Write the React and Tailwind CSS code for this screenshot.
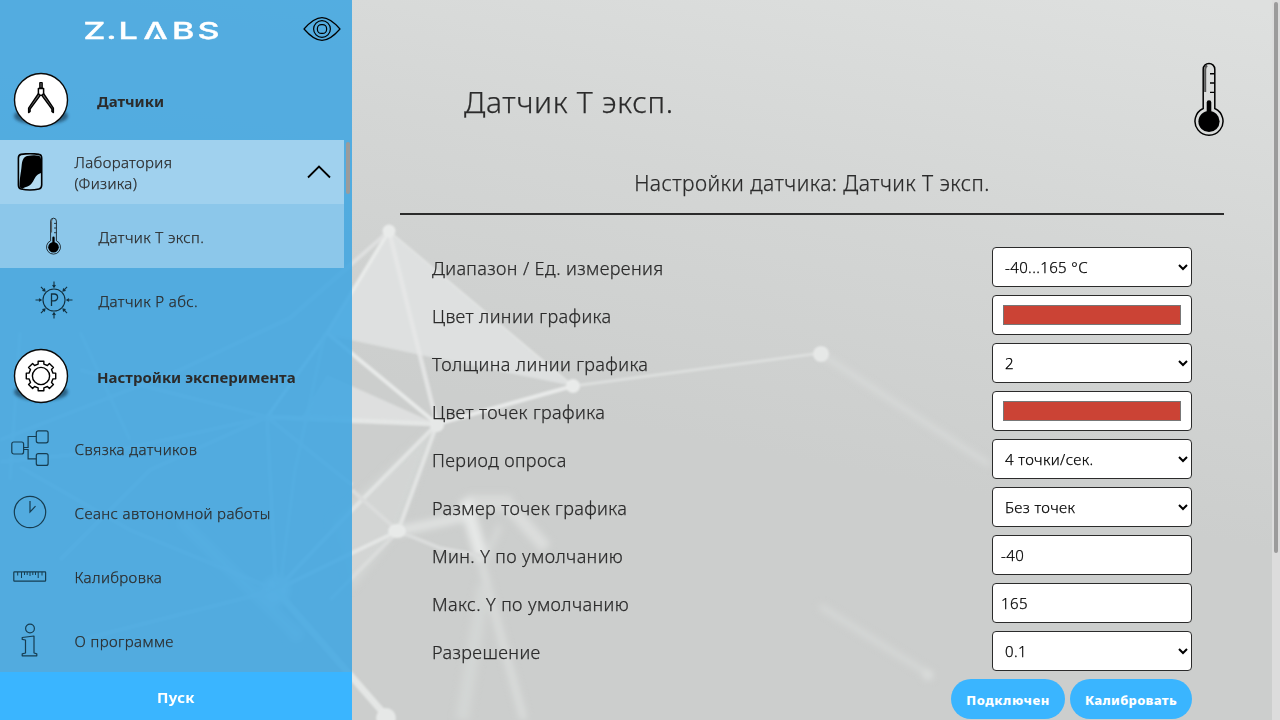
import React from "react";

const FONT = "font-['Noto_Sans','Open_Sans',sans-serif]";

function Backdrop() {
  return (
    <svg className="absolute inset-0 h-full w-full" viewBox="0 0 1280 720" preserveAspectRatio="none" aria-hidden="true">
      <defs>
        <linearGradient id="base" gradientUnits="userSpaceOnUse" x1="900" y1="-60" x2="800" y2="460">
          <stop offset="0" stopColor="#dee0df" />
          <stop offset="0.5" stopColor="#d4d6d5" />
          <stop offset="1" stopColor="#cccecd" />
        </linearGradient>
        <filter id="soft1" filterUnits="userSpaceOnUse" x="0" y="0" width="1280" height="740"><feGaussianBlur stdDeviation="1.2" /></filter>
        <filter id="soft3" filterUnits="userSpaceOnUse" x="0" y="0" width="1280" height="740"><feGaussianBlur stdDeviation="3.5" /></filter>
      </defs>
      <rect width="1280" height="720" fill="url(#base)" />
      <g filter="url(#soft3)">
        <path d="M437 424 330 520 352 590 398 531Z" fill="#d6d8d7" opacity="0.7" />
        <path d="M821 354 990 465" stroke="#d9dbda" strokeWidth="5" />
        <path d="M482 565 502 640 524 720" fill="none" stroke="#dcdedd" strokeWidth="7" opacity="0.9" />
        <path d="M484 585 462 720" stroke="#d5d7d6" strokeWidth="14" opacity="0.8" />
        <path d="M466 503h46" stroke="#dcdedd" strokeWidth="16" opacity="0.8" />
        <path d="M508 505 546 548" stroke="#dbdddc" strokeWidth="13" />
        <path d="M465 500 483 562" stroke="#e6e8e7" strokeWidth="13" />
        <path d="M500 525 484 562" stroke="#d6d8d7" strokeWidth="6" />
        <path d="M398 531 465 517" stroke="#e0e2e1" strokeWidth="9" />
        <path d="M820 606 930 675" stroke="#d6d8d7" strokeWidth="6" />
        <circle cx="928" cy="675" r="5" fill="#dddfde" />
        <circle cx="276" cy="590" r="14" fill="#e9ebea" />
        <circle cx="296" cy="634" r="8" fill="#e0e2e1" />
        <path d="M180 520 296 634" stroke="#e0e2e1" strokeWidth="12" />
      </g>
      <g filter="url(#soft1)">
        <path d="M389 231 573 386 425 356 327 335Z" fill="#e1e3e3" opacity="0.85" />
        <path d="M327 375 437 424 300 420Z" fill="#e2e4e4" opacity="0.8" />
        <path d="M389 231 327 333 267 417" fill="none" stroke="#e9ebea" strokeWidth="3.500" />
        <path d="M389 231 290 318 180 370 0 440" fill="none" stroke="#e2e4e3" strokeWidth="4" opacity="0.8" />
        <path d="M389 231 437 424" fill="none" stroke="#e6e8e7" strokeWidth="4.500" opacity="0.85" />
        <path d="M389 231 573 386" stroke="#e2e4e3" strokeWidth="2" />
        <path d="M437 424 573 386" stroke="#e8eae9" strokeWidth="4" />
        <path d="M573 386 821 353" stroke="#dddfde" strokeWidth="3" />
        <path d="M437 424 327 333" stroke="#e8eae9" strokeWidth="4" />
        <path d="M437 424 267 417" stroke="#e4e6e5" strokeWidth="5" />
        <path d="M437 424 352 510 276 590M437 424 398 531" fill="none" stroke="#e2e4e3" strokeWidth="4" />
        <path d="M398 531 352 553 276 590" fill="none" stroke="#e4e6e5" strokeWidth="4" />
        <path d="M398 531 330 600M398 531 440 548 482 556M352 490 398 531" fill="none" stroke="#dadcdb" strokeWidth="4" />
        <path d="M267 417 80 370M267 417 150 470 60 560M267 417 276 590 80 640M276 590 130 530 20 467M267 417 120 450 0 462M267 417 352 485" fill="none" stroke="#e2e4e3" strokeWidth="4" opacity="0.8" />
        <path d="M276 590 386 716" stroke="#e4e6e5" strokeWidth="7" />
        <path d="M325 333 295 470 280 588M20 332 10 480M80 332 130 440" fill="none" stroke="#e0e2e1" strokeWidth="4" opacity="0.7" />
        <circle cx="389" cy="231" r="6.500" fill="#e9ebea" />
        <circle cx="437" cy="425" r="7" fill="#e6e8e7" />
        <circle cx="573" cy="386" r="7" fill="#e9ebea" />
        <circle cx="821" cy="354" r="8" fill="#e6e8e7" />
        <ellipse cx="397" cy="531" rx="9" ry="7" fill="#e8eae9" />
        <circle cx="386" cy="718" r="10" fill="#e6e8e7" />
      </g>
    </svg>
  );
}

function Logo() {
  return (
    <svg className="h-[30px] w-[144px] overflow-visible" viewBox="0 0 144 30" fill="#fff" stroke="#fff" strokeWidth=".4" aria-label="Z.LABS">
      <text y="20" transform="scale(1.45 1)" fontFamily="Inter, sans-serif" fontWeight="500" fontSize="23.500" x="1 16.800 25.200 42.400 62 79.600">Z.LΛBS</text>
      <path d="M75 14.500 78.500 20H71.500Z" stroke="none" />
    </svg>
  );
}

function EyeIcon() {
  return (
    <svg className="h-[26px] w-[38px]" viewBox="0 0 38 26" fill="none" stroke="#000" strokeWidth="1.2">
      <path d="M1 13C8 5 13 1.6 19 1.6S30 5 37 13C30 21 25 24.4 19 24.4S8 21 1 13Z" strokeLinejoin="round" />
      <circle cx="19" cy="13" r="8.4" />
      <rect x="14.4" y="8.6" width="9.2" height="8.8" rx="4" />
    </svg>
  );
}

function Badge({ children }) {
  return (
    <svg className="h-[60px] w-[60px]" viewBox="0 0 60 60" fill="none">
      <defs><filter id="sh" x="-20%" y="-50%" width="140%" height="200%"><feGaussianBlur stdDeviation="1.6" /></filter></defs>
      <ellipse cx="30" cy="46" rx="27" ry="9" fill="#123a52" opacity="0.65" filter="url(#sh)" />
      <circle cx="30" cy="30" r="26.5" fill="#fff" stroke="#0a0a0a" strokeWidth="1.4" />
      {children}
    </svg>
  );
}

function Compass() {
  return (
    <g stroke="#000" strokeLinejoin="round">
      <path d="M28.700 12.500h2.600v5.500h-2.600z" fill="#444" strokeWidth="1" />
      <path d="M27.500 23.500 17.600 38.200v4.400l1.500-1.200V39L29.200 25.400M32.500 23.500 42.400 38.200v4.400l-1.500-1.200V39L30.800 25.400" fill="#777" strokeWidth="1.400" />
      <path d="M27.400 18.500h5.200v4.800l-1.200 1.900h-2.800l-1.200-1.900z" fill="#fff" strokeWidth="1.500" />
    </g>
  );
}

function Gear() {
  const teeth = [];
  for (let i = 0; i < 8; i++) {
    const c = (i * 45 - 90) * (Math.PI / 180);
    [[-13.5, 12.3], [-11, 15], [11, 15], [13.5, 12.3]].forEach(([d, r]) => {
      const a = c + (d * Math.PI) / 180;
      teeth.push(`${(30 + r * Math.cos(a)).toFixed(2)} ${(30 + r * Math.sin(a)).toFixed(2)}`);
    });
  }
  return (
    <g stroke="#000" strokeWidth="1.4" strokeLinejoin="round">
      <path d={`M${teeth.join("L")}Z`} />
      <circle cx="30" cy="30" r="8.6" />
    </g>
  );
}

function DeviceIcon() {
  return (
    <svg className="h-[38px] w-[26px]" viewBox="0 0 26 38" fill="none">
      <path d="M4 1.4Q13-.2 22 1.4 24.6 1.8 24.7 5V32Q24.6 35.4 22 36 13 38 4 36 1.4 35.5 1.4 32V5Q1.4 2 4 1.4Z" fill="#b5dcf1" stroke="#000" strokeWidth="1.6" />
      <path d="M10 3Q17 1.800 22 2.800 24 3.500 24 6V20C19 21.500 18 25 16 28.500 13 34 8 33.500 5 36L2.500 34C2.500 25 4 20 4.600 13 5.200 7 6.500 4 10 3Z" fill="#000" />
    </svg>
  );
}

function Thermometer({ className }) {
  return (
    <svg className={className} viewBox="0 0 30 76" fill="none" stroke="#000">
      <path d="M9.200 47.500V8.200a5.800 5.800 0 0 1 11.600 0v39.300A14 14 0 1 1 9.200 47.500Z" strokeWidth="1.500" />
      <circle cx="15" cy="60.500" r="10.600" fill="#000" stroke="none" />
      <path d="M15 41.500v14" strokeWidth="4.600" strokeLinecap="round" />
      <path d="M11.200 31V8.500q0-3 2-4" strokeWidth="2" stroke="#555" />
      <path d="M16 12.800h4.500M16 22h4.500M16 31.400h4.500" strokeWidth="1.400" />
    </svg>
  );
}

function PressureIcon() {
  return (
    <svg className="h-[38px] w-[38px]" viewBox="0 0 38 38" fill="none" stroke="#12303f" strokeWidth="1.1">
      <circle cx="19" cy="19" r="11" />
      <path d="M16.500 25V13h2.700a3.200 3.200 0 0 1 0 6.800h-2.700" strokeWidth="1.300" />
      {[0, 45, 90, 135, 180, 225, 270, 315].map((a) => (
        <path key={a} d="M19 .5v5.500M17.600 4 19 6.200 20.400 4" transform={`rotate(${a} 19 19)`} />
      ))}
    </svg>
  );
}

function LinkIcon() {
  return (
    <svg className="h-[38px] w-[38px]" viewBox="0 0 38 38" fill="none" stroke="#173d51" strokeWidth="1.200">
      <rect x=".8" y="13" width="11.800" height="12" rx="2" />
      <rect x="25.300" y="1.800" width="11.800" height="12" rx="2" />
      <rect x="25.300" y="24.600" width="11.800" height="11.800" rx="2" />
      <path d="M12.600 18.500h4.500v-11h8.200M12.600 20.500h4.500v9.300h8.200" />
    </svg>
  );
}

function ClockIcon() {
  return (
    <svg className="h-[34px] w-[34px]" viewBox="0 0 34 34" fill="none" stroke="#173d51" strokeWidth="1.200">
      <circle cx="17" cy="17" r="15.700" />
      <path d="M17 6v11l5.500-5.800" />
    </svg>
  );
}

function RulerIcon() {
  return (
    <svg className="h-[11px] w-[34px]" viewBox="0 0 34 11" fill="none" stroke="#173d51" strokeWidth="1.200">
      <rect x=".8" y=".8" width="31.800" height="9.400" rx=".6" />
      <path d="M4.700 1v3.500M8.500 1v6M11.500 1v3M14.200 1v3M17 1v4M19.800 1v3M22.500 1v3M25.200 1v6M29 1v3.500" strokeWidth="1" />
    </svg>
  );
}

function InfoIcon() {
  return (
    <svg className="h-[34px] w-[17px]" viewBox="0 0 17 34" fill="none" stroke="#173d51" strokeWidth="1.200">
      <circle cx="9" cy="5.500" r="4.400" />
      <path d="M1.200 14.500 13 13v17l2.800.8v2H1.200v-2L4.500 30V17L1.200 16.300Z" strokeLinejoin="round" />
    </svg>
  );
}

function Section({ icon, title }) {
  return (
    <div className="flex h-[84px] items-center pt-1 pl-[11px]">
      {icon}
      <h2 className="mt-[3px] ml-[26px] text-[15px] font-bold">{title}</h2>
    </div>
  );
}

const thin = "font-light [-webkit-text-stroke:0.25px_currentColor]";

function Item({ icon, label, sub, active }) {
  return (
    <div className={"flex h-16 w-[344px] items-center " + (active ? "bg-[#8cc7ea]" : "")}>
      <span className={"flex w-[59px] items-center justify-center " + (sub ? "ml-6" : "")}>{icon}</span>
      <span className={"mt-[3px] ml-[15.5px] text-[15px] tracking-[0.39px] " + thin}>{label}</span>
    </div>
  );
}

const control = "h-10 w-[200px] rounded-[4px] border border-[#2b2b2b] bg-white px-2 text-[15px] tracking-[0.38px] text-black " + thin;

function Field({ type, value }) {
  if (type === "color") return <input type="color" defaultValue={value} className="h-10 w-[200px] rounded-[4px] border border-[#2b2b2b] bg-white px-2 py-[5px]" />;
  if (type === "text") return <input type="text" defaultValue={value} className={control} />;
  return (
    <select defaultValue={value} className={control}>
      <option>{value}</option>
    </select>
  );
}

const rows = [
  ["Диапазон / Ед. измерения", "select", "-40...165 °C"],
  ["Цвет линии графика", "color", "#cb4335"],
  ["Толщина линии графика", "select", "2"],
  ["Цвет точек графика", "color", "#cb4335"],
  ["Период опроса", "select", "4 точки/сек."],
  ["Размер точек графика", "select", "Без точек"],
  ["Мин. Y по умолчанию", "text", "-40"],
  ["Макс. Y по умолчанию", "text", "165"],
  ["Разрешение", "select", "0.1"],
];

export default function App() {
  return (
    <div className={"relative flex h-[720px] w-[1280px] overflow-hidden text-[#2b2b2b] " + FONT}>
      <Backdrop />
      <aside className="relative flex w-[352px] shrink-0 flex-col bg-[#3ca5e2]/85">
        <header className="flex h-14 items-start pt-4 pl-[82px]">
          <div className="pt-[3px]"><Logo /></div>
          <span className="ml-[77px]"><EyeIcon /></span>
        </header>
        <Section icon={<Badge><Compass /></Badge>} title="Датчики" />
        <div className="relative">
          <div className="flex h-16 w-[344px] items-center bg-[#a0d1ee]">
            <span className="flex w-[59px] justify-center"><DeviceIcon /></span>
            <span className={"mt-px ml-[15.5px] flex-1 text-[15px] leading-[21px] tracking-[0.37px] " + thin}>Лаборатория<br />(Физика)</span>
            <svg className="mr-[13px] h-[14px] w-6" viewBox="0 0 24 14" fill="none" stroke="#000" strokeWidth="1.800"><path d="M1 12.500 12 1.500 23 12.500" /></svg>
          </div>
          <div className="absolute top-[2px] right-[2px] h-[52px] w-1 rounded-full bg-[#9b9b9b]" />
        </div>
        <Item sub active icon={<Thermometer className="h-[38px] w-[15px]" />} label="Датчик Т эксп." />
        <Item sub icon={<PressureIcon />} label="Датчик Р абс." />
        <Section icon={<Badge><Gear /></Badge>} title="Настройки эксперимента" />
        <Item icon={<LinkIcon />} label="Связка датчиков" />
        <Item icon={<ClockIcon />} label="Сеанс автономной работы" />
        <Item icon={<RulerIcon />} label="Калибровка" />
        <Item icon={<InfoIcon />} label="О программе" />
        <button className="h-12 w-full bg-[#3ab5ff] pt-[2px] text-[15px] font-bold tracking-[0.3px] text-white">Пуск</button>
      </aside>
      <main className="relative flex w-[920px] flex-col pr-[48px] pl-12">
        <div className="flex h-[140px] items-start justify-between pt-[61px]">
          <h1 className={"mt-[18px] ml-16 text-[30px] leading-[45px] tracking-[0.66px] " + thin}>Датчик Т эксп.</h1>
          <Thermometer className="h-[76px] w-[30px]" />
        </div>
        <div className="flex h-[75px] items-end justify-center border-b-2 border-[#2b2b2b] pb-[13px]">
          <h2 className={"text-[21px] leading-[34px] tracking-[0.44px] " + thin}>Настройки датчика: Датчик Т эксп.</h2>
        </div>
        <div className="mt-8 flex flex-col gap-2 px-8">
          {rows.map(([label, type, value]) => (
            <div key={label} className="flex h-10 items-center justify-between">
              <span className={"mt-[3px] text-[18px] tracking-[0.39px] " + thin}>{label}</span>
              <Field type={type} value={value} />
            </div>
          ))}
          <div className="flex justify-end gap-[5px]">
            <button className="h-10 w-[114px] rounded-full bg-[#3ab5ff] pt-[3px] text-[13px] font-extrabold tracking-[0.55px] text-white">Подключен</button>
            <button className="h-10 w-[122px] rounded-full bg-[#3ab5ff] pt-[3px] text-[13px] font-extrabold tracking-[0.3px] text-white">Калибровать</button>
          </div>
        </div>
      </main>
      <div className="relative flex w-2 shrink-0 justify-center bg-[#dcdcdc] pt-[2px]">
        <div className="h-[551px] w-1 rounded-full bg-[#9b9b9b]" />
      </div>
    </div>
  );
}
